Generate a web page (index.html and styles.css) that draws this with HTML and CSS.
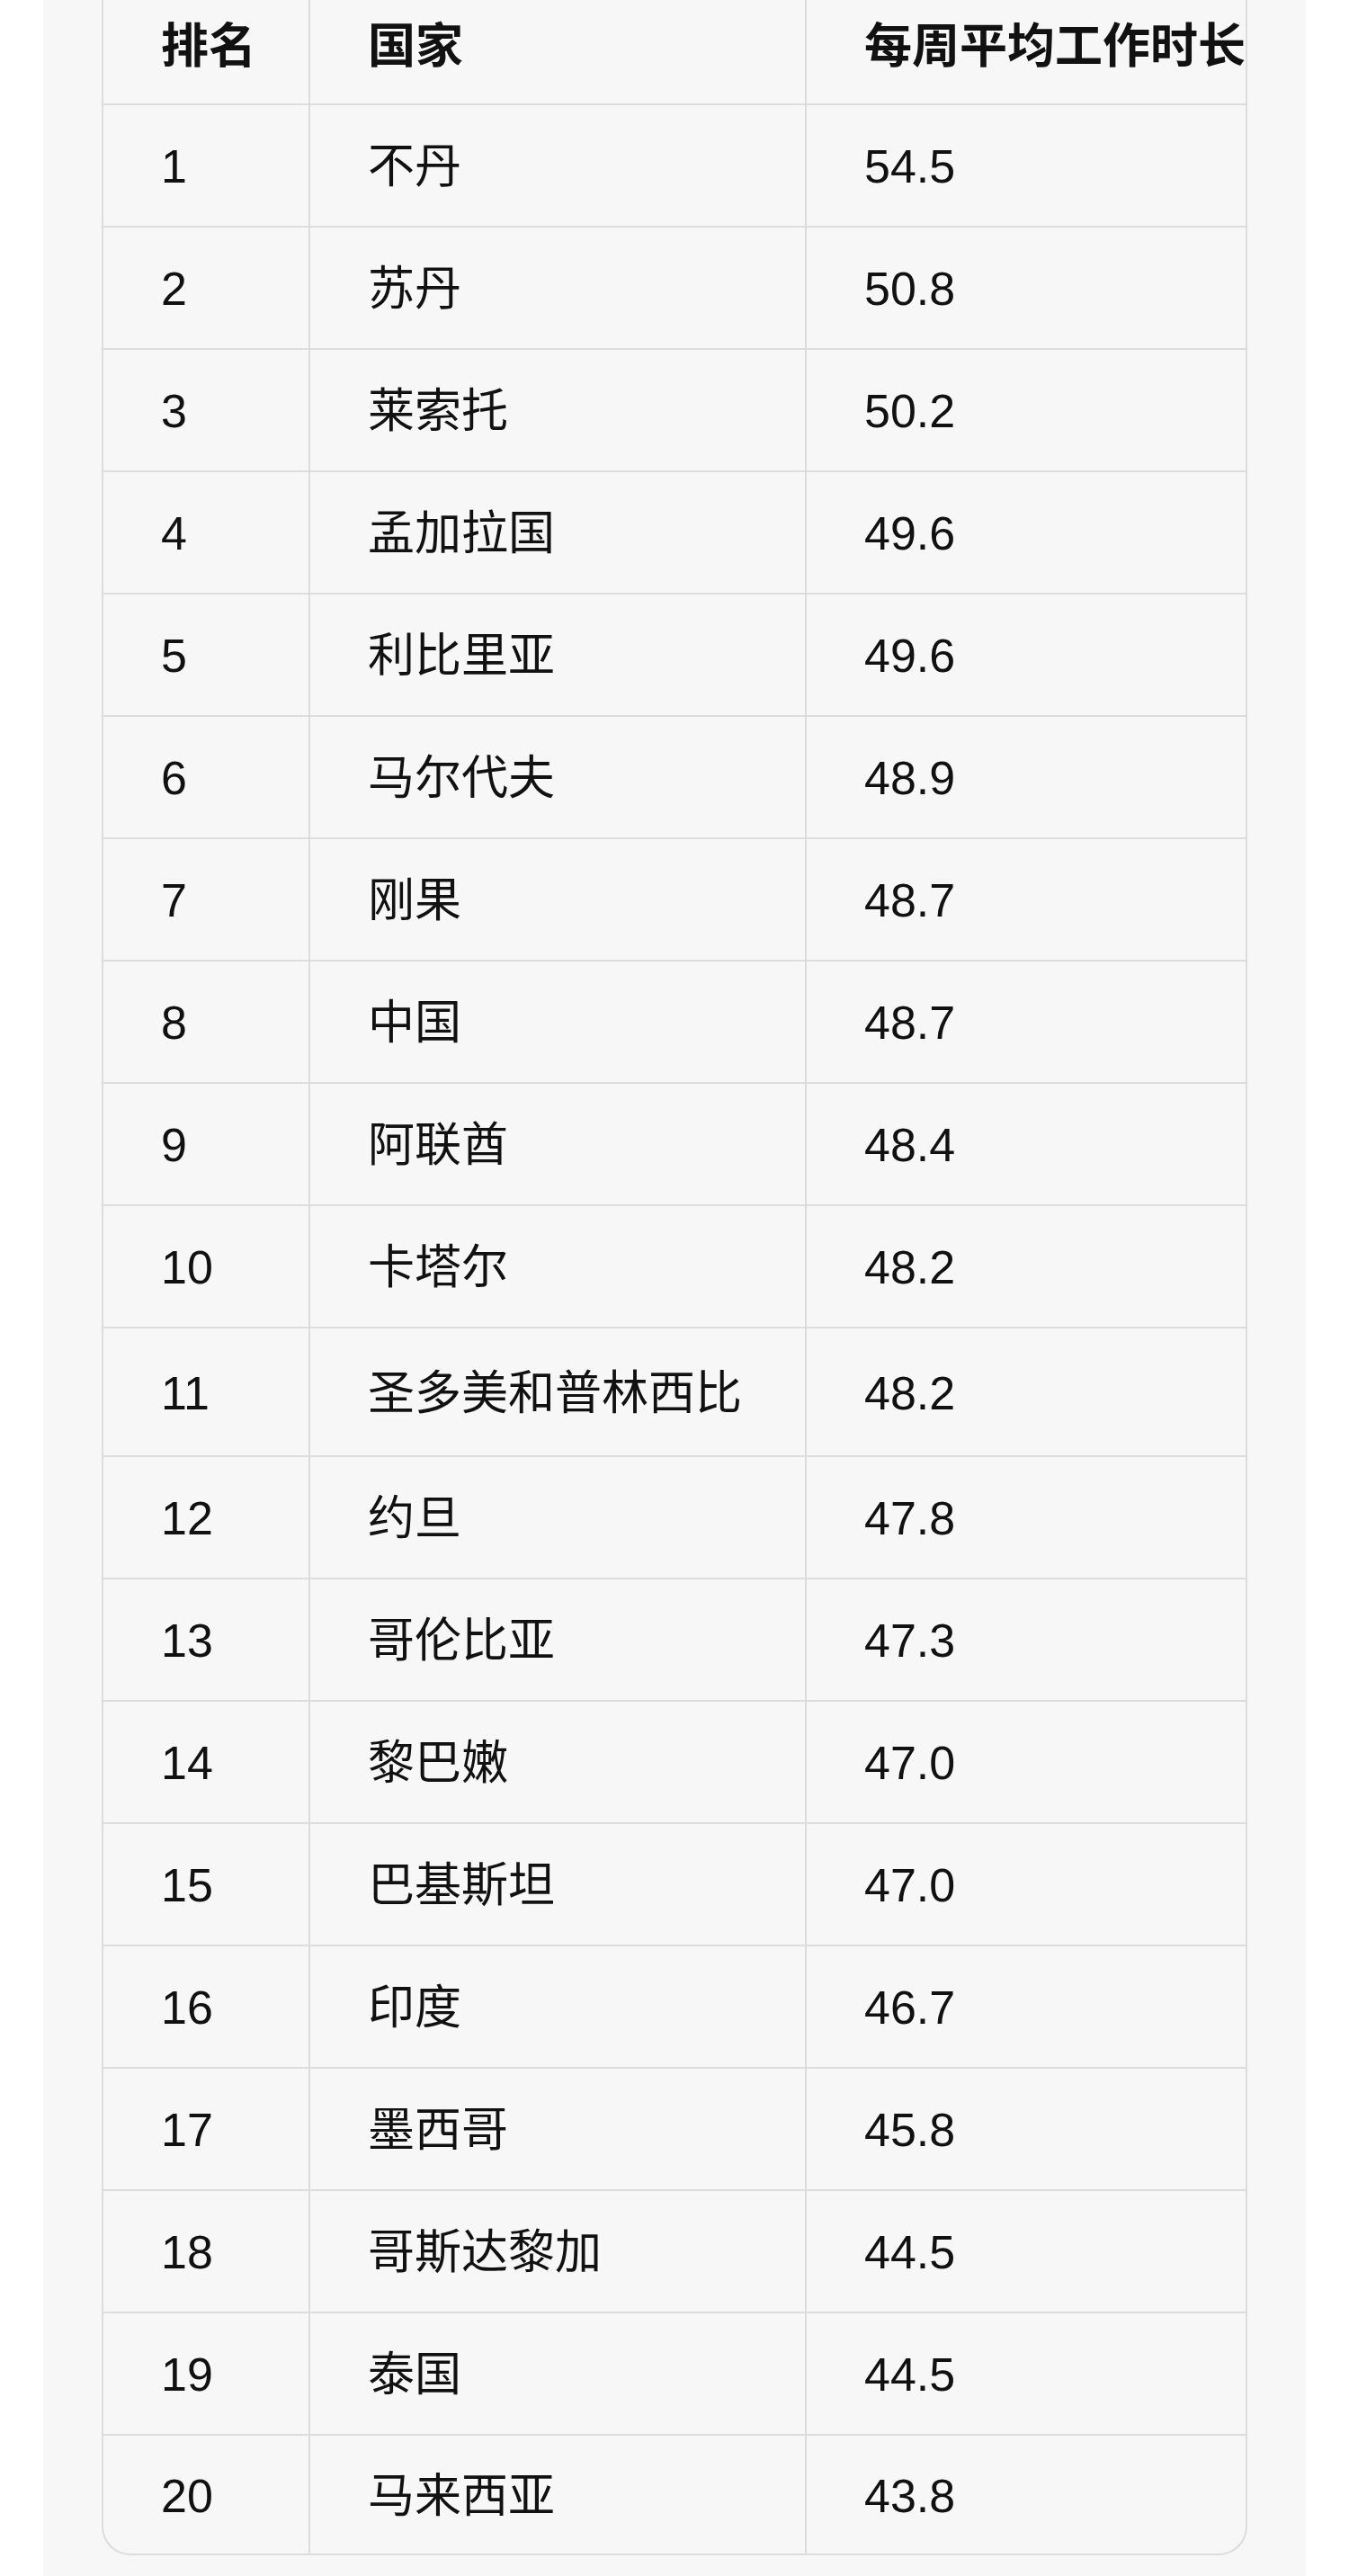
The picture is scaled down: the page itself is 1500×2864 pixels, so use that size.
FILE: index.html
```html
<!DOCTYPE html>
<html lang="zh-CN">
<head>
<meta charset="utf-8">
<title>每周平均工作时长排名</title>
<link rel="stylesheet" href="styles.css">
</head>
<body>
<div class="panel">
  <table class="rank-table">
    <colgroup>
      <col class="c-rank">
      <col class="c-country">
      <col class="c-hours">
    </colgroup>
    <thead>
      <tr><th>排名</th><th>国家</th><th>每周平均工作时长</th></tr>
    </thead>
    <tbody>
      <tr><td>1</td><td>不丹</td><td>54.5</td></tr>
      <tr><td>2</td><td>苏丹</td><td>50.8</td></tr>
      <tr><td>3</td><td>莱索托</td><td>50.2</td></tr>
      <tr><td>4</td><td>孟加拉国</td><td>49.6</td></tr>
      <tr><td>5</td><td>利比里亚</td><td>49.6</td></tr>
      <tr><td>6</td><td>马尔代夫</td><td>48.9</td></tr>
      <tr><td>7</td><td>刚果</td><td>48.7</td></tr>
      <tr><td>8</td><td>中国</td><td>48.7</td></tr>
      <tr><td>9</td><td>阿联酋</td><td>48.4</td></tr>
      <tr><td>10</td><td>卡塔尔</td><td>48.2</td></tr>
      <tr class="tall"><td>11</td><td>圣多美和普林西比</td><td>48.2</td></tr>
      <tr><td>12</td><td>约旦</td><td>47.8</td></tr>
      <tr><td>13</td><td>哥伦比亚</td><td>47.3</td></tr>
      <tr><td>14</td><td>黎巴嫩</td><td>47.0</td></tr>
      <tr><td>15</td><td>巴基斯坦</td><td>47.0</td></tr>
      <tr><td>16</td><td>印度</td><td>46.7</td></tr>
      <tr><td>17</td><td>墨西哥</td><td>45.8</td></tr>
      <tr><td>18</td><td>哥斯达黎加</td><td>44.5</td></tr>
      <tr><td>19</td><td>泰国</td><td>44.5</td></tr>
      <tr class="last"><td>20</td><td>马来西亚</td><td>43.8</td></tr>
    </tbody>
  </table>
</div>
</body>
</html>
```
FILE: styles.css
```css
html, body {
  margin: 0;
  padding: 0;
  background: #ffffff;
}

body {
  font-family: "Liberation Sans", "Noto Sans CJK SC", sans-serif;
  color: #111111;
  height: 2864px;
  overflow: hidden;
}

.panel {
  margin-left: 48px;
  width: 1404px;
  height: 2864px;
  box-sizing: border-box;
  padding: 0 65px;
  background: #f7f7f7;
  overflow: hidden;
}

.rank-table {
  margin-top: -15px;
  width: 1274px;
  table-layout: fixed;
  border-collapse: separate;
  border-spacing: 0;
  background: #f7f7f7;
  border-left: 2px solid #dcdcdc;
  border-right: 2px solid #dcdcdc;
  border-bottom: 2px solid #dcdcdc;
  border-radius: 0 0 32px 32px;
}

.c-rank { width: 230px; }
.c-country { width: 552px; }
.c-hours { width: 488px; }

.rank-table th,
.rank-table td {
  font-size: 52px;
  line-height: 60px;
  padding: 38px 10px 36px 64px;
  text-align: left;
  white-space: nowrap;
  overflow: visible;
  border-right: 2px solid #dcdcdc;
  border-bottom: 2px solid #dcdcdc;
}

.rank-table th:last-child,
.rank-table td:last-child {
  border-right: none;
}

.rank-table th {
  font-size: 53px;
  font-weight: 700;
  padding-top: 37px;
  padding-bottom: 33px;
}

.rank-table td {
  font-weight: 400;
}

.rank-table tr.tall td {
  padding-top: 42px;
  padding-bottom: 39px;
}

.rank-table tr.last td {
  border-bottom: none;
  padding-top: 37px;
  padding-bottom: 34px;
}
```
